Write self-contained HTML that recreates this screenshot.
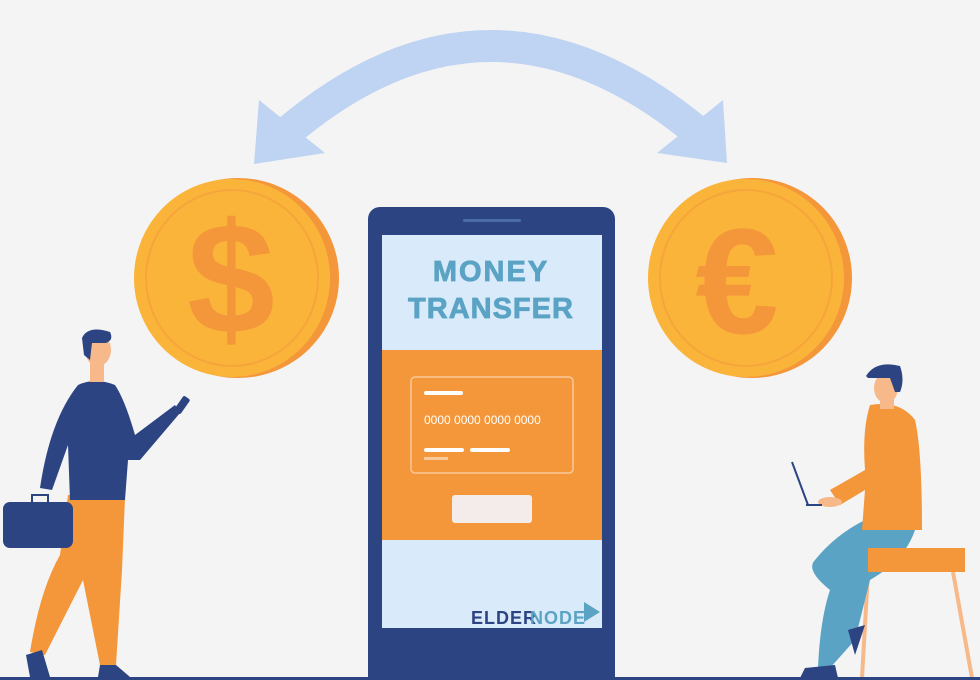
<!DOCTYPE html>
<html><head><meta charset="utf-8"><style>
html,body{margin:0;padding:0;background:#f4f4f4;}
body{width:980px;height:680px;overflow:hidden;position:relative;font-family:"Liberation Sans",sans-serif;}
svg{position:absolute;left:0;top:0;}
</style></head><body>
<svg width="980" height="680" viewBox="0 0 980 680">
<rect width="980" height="680" fill="#f4f4f4"/>
<!-- arrow -->
<path d="M285,134 Q490,-42 700,134" fill="none" stroke="#bfd4f2" stroke-width="32"/>
<polygon points="259,100 254,164 325,153" fill="#bfd4f2"/>
<polygon points="723,100 727,163 657,153" fill="#bfd4f2"/>
<!-- dollar coin -->
<ellipse cx="238" cy="278" rx="101" ry="100" fill="#f4963a"/>
<ellipse cx="232" cy="278" rx="98" ry="99" fill="#fbb43a"/>
<ellipse cx="232" cy="278" rx="86" ry="88" fill="none" stroke="#f5a53a" stroke-width="2"/>
<text x="231" y="333" text-anchor="middle" font-size="158" font-weight="bold" fill="#f4963a" font-family="Liberation Sans,sans-serif">$</text>
<!-- euro coin -->
<ellipse cx="752" cy="278" rx="100" ry="100" fill="#f4963a"/>
<ellipse cx="746" cy="278" rx="98" ry="99" fill="#fbb43a"/>
<ellipse cx="746" cy="278" rx="86" ry="88" fill="none" stroke="#f5a53a" stroke-width="2"/>
<text x="737" y="333" text-anchor="middle" font-size="150" font-weight="bold" fill="#f4963a" font-family="Liberation Sans,sans-serif">€</text>
<!-- phone -->
<rect x="368" y="207" width="247" height="490" rx="12" fill="#2c4482"/>
<rect x="382" y="235" width="220" height="393" fill="#d9eafb"/>
<rect x="382" y="350" width="220" height="190" fill="#f4963a"/>
<rect x="463" y="219" width="58" height="3" rx="1.5" fill="#4a6aa8"/>
<text x="491" y="281" text-anchor="middle" font-size="29" font-weight="bold" fill="#5ba3c4" letter-spacing="2" stroke="#5ba3c4" stroke-width="0.8">MONEY</text>
<text x="491" y="318" text-anchor="middle" font-size="29" font-weight="bold" fill="#5ba3c4" letter-spacing="1" stroke="#5ba3c4" stroke-width="0.8">TRANSFER</text>
<rect x="411" y="377" width="162" height="96" rx="4" fill="none" stroke="#f9c99a" stroke-width="1.5"/>
<rect x="424" y="391" width="39" height="4" rx="2" fill="#fff"/>
<text x="424" y="424" font-size="12" fill="#fff">0000 0000 0000 0000</text>
<rect x="424" y="448" width="40" height="4" rx="2" fill="#fff"/>
<rect x="470" y="448" width="40" height="4" rx="2" fill="#fff"/>
<rect x="424" y="457" width="24" height="3" fill="#f9c99a"/>
<rect x="452" y="495" width="80" height="28" rx="3" fill="#f3ecea"/>
<text x="471" y="624" font-size="18" font-weight="bold" fill="#2c4482" letter-spacing="1">ELDER</text>
<text x="530" y="624" font-size="18" font-weight="bold" fill="#5ba3c4" letter-spacing="1">NODE</text>
<polygon points="584,602 600,612 584,622" fill="#5ba3c4"/>
<!-- left man -->
<path d="M68,495 L125,498 L122,570 L116,665 L100,665 L83,580 L45,655 L30,652 Q40,590 60,555 Z" fill="#f4963a"/>
<path d="M78,385 Q95,377 115,385 Q125,400 135,435 L175,405 L180,413 L140,460 L128,460 L125,500 L70,500 L68,445 L52,490 L40,488 Q50,420 78,385 Z" fill="#2c4482"/>
<rect x="178" y="396" width="8" height="18" rx="2" transform="rotate(35 182 405)" fill="#2c4482"/>
<rect x="3" y="502" width="70" height="46" rx="7" fill="#2c4482"/>
<rect x="32" y="495" width="16" height="10" fill="none" stroke="#2c4482" stroke-width="2"/>
<ellipse cx="98" cy="350" rx="13" ry="16" fill="#f7b98a"/>
<rect x="90" y="360" width="14" height="22" fill="#f7b98a"/>
<path d="M82,338 Q88,325 110,332 Q114,340 106,343 L92,343 L90,360 L84,355 Z" fill="#2c4482"/>
<path d="M26,655 L42,650 L50,677 L30,677 Z" fill="#2c4482"/>
<path d="M100,665 L116,665 L130,677 L98,677 Z" fill="#2c4482"/>
<!-- right man -->
<line x1="868" y1="572" x2="862" y2="678" stroke="#f7b98a" stroke-width="4"/>
<line x1="953" y1="572" x2="972" y2="678" stroke="#f7b98a" stroke-width="4"/>
<path d="M865,520 L915,530 Q905,560 870,580 L855,640 L830,668 L818,668 Q820,620 830,590 Q805,570 815,560 Q835,535 865,520 Z" fill="#5ba3c4"/>
<path d="M848,630 L865,625 L855,655 Z" fill="#2c4482"/>
<path d="M805,668 L835,665 L838,678 L800,678 Z" fill="#2c4482"/>
<rect x="868" y="548" width="97" height="24" fill="#f4963a"/>
<path d="M870,405 Q900,400 915,420 Q922,450 922,530 L862,530 L865,490 L840,505 L830,490 L865,470 Q862,430 870,405 Z" fill="#f4963a"/>
<ellipse cx="830" cy="502" rx="12" ry="5" fill="#f7b98a"/>
<line x1="792" y1="462" x2="808" y2="505" stroke="#2c4482" stroke-width="2"/>
<line x1="806" y1="505" x2="822" y2="505" stroke="#2c4482" stroke-width="2"/>
<ellipse cx="886" cy="388" rx="12" ry="15" fill="#f7b98a"/>
<rect x="880" y="395" width="14" height="14" fill="#f7b98a"/>
<path d="M866,376 Q876,360 900,366 Q905,380 900,392 L895,392 L890,378 L868,378 Z" fill="#2c4482"/>
<!-- ground -->
<rect x="0" y="677" width="980" height="3" fill="#2c4482"/>
</svg>
</body></html>
